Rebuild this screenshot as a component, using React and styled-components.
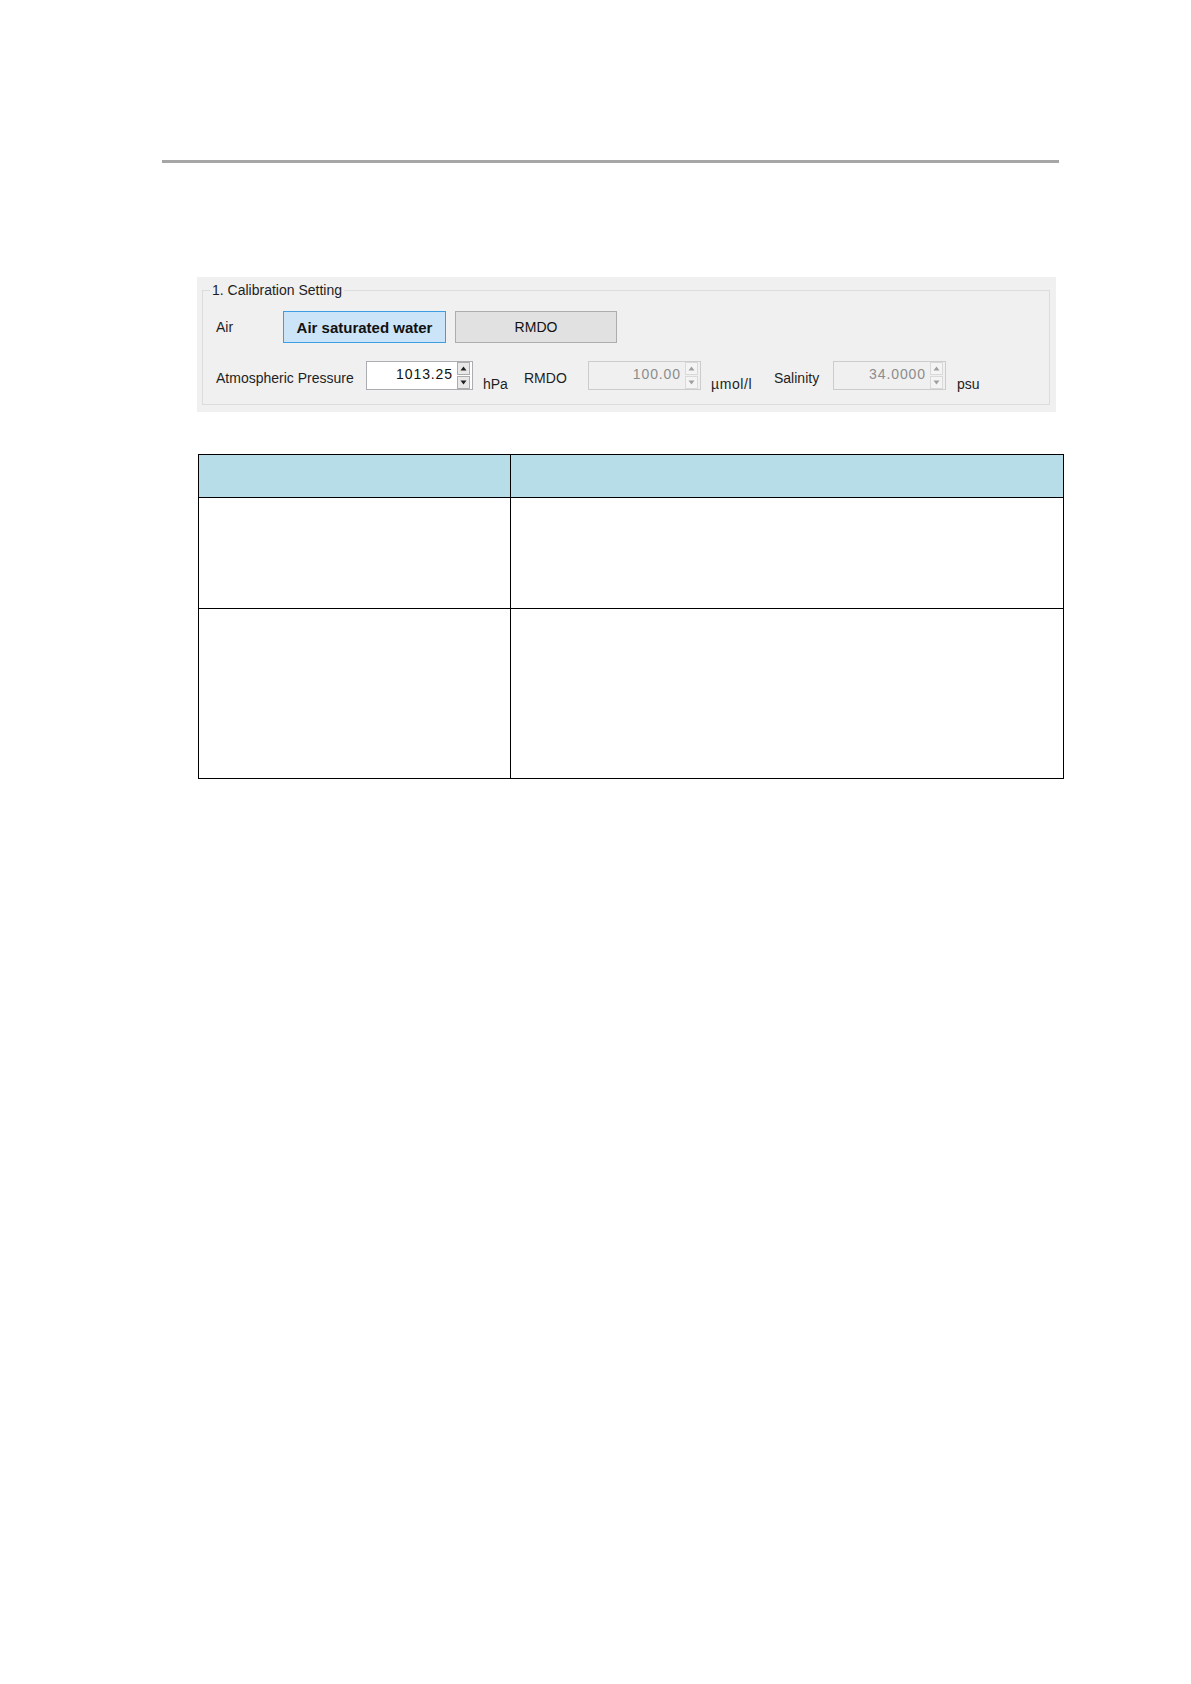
import styled, { createGlobalStyle } from 'styled-components';

const GlobalStyle = createGlobalStyle`
  html, body {
    margin: 0;
    padding: 0;
    background: #ffffff;
  }
  body {
    font-family: "Liberation Sans", Arial, sans-serif;
    min-height: 1684px;
  }
`;

const Page = styled.div`
  width: 1191px;
  padding-top: 160px;
  box-sizing: border-box;
`;

const Rule = styled.div`
  margin-left: 162px;
  width: 897px;
  height: 3px;
  background: #a6a6a6;
`;

const Panel = styled.div`
  margin: 114px 0 0 197px;
  width: 859px;
  height: 135px;
  box-sizing: border-box;
  background: #f0f0f0;
  padding: 5px 6px 7px 5px;
`;

const Group = styled.fieldset`
  margin: 0;
  height: 100%;
  box-sizing: border-box;
  border: 1px solid #dcdcdc;
  padding: 0 0 0 13px;
`;

const Legend = styled.legend`
  margin-left: -6px;
  padding: 0 2px;
  font-size: 14px;
  line-height: 16px;
  color: #1e1e1e;
`;

const Row = styled.div`
  display: flex;
  align-items: center;
  margin-top: ${p => p.$top}px;
  height: ${p => p.$h}px;
`;

const Label = styled.span`
  width: ${p => p.$w}px;
  flex-shrink: 0;
  padding-top: ${p => p.$dy || 0}px;
  font-size: 14px;
  color: #1e1e1e;
  white-space: nowrap;
`;

const Unit = styled.span`
  width: ${p => p.$w}px;
  margin-left: ${p => p.$ml}px;
  flex-shrink: 0;
  align-self: flex-end;
  margin-bottom: -2px;
  font-size: 14px;
  letter-spacing: ${p => p.$ls || 0}px;
  color: #1e1e1e;
  white-space: nowrap;
`;

const Button = styled.div`
  width: ${p => p.$w}px;
  height: 32px;
  margin-right: 9px;
  box-sizing: border-box;
  display: flex;
  align-items: center;
  justify-content: center;
  font-size: ${p => (p.$active ? 15 : 14)}px;
  font-weight: ${p => (p.$active ? 700 : 400)};
  color: #111;
  background: ${p => (p.$active ? '#cce4f7' : '#e1e1e1')};
  border: 1px solid ${p => (p.$active ? '#3d9de2' : '#adadad')};
`;

const Spin = styled.div`
  width: ${p => p.$w}px;
  height: 29px;
  box-sizing: border-box;
  display: flex;
  align-items: stretch;
  background: ${p => (p.$disabled ? '#f0f0f0' : '#ffffff')};
  border: 1px solid ${p => (p.$disabled ? '#cccccc' : '#abadb3')};
  padding: 0 2px 0 0;
`;

const SpinValue = styled.span`
  flex: 1;
  text-align: right;
  padding: 4px 4px 0 0;
  font-size: 14px;
  letter-spacing: 0.9px;
  color: ${p => (p.$disabled ? '#8c8c8c' : '#111')};
`;

const SpinButtons = styled.div`
  width: 13px;
  display: flex;
  flex-direction: column;
  justify-content: center;
  gap: 1px;
`;

const SpinBtn = styled.div`
  height: 13px;
  box-sizing: border-box;
  display: flex;
  align-items: center;
  justify-content: center;
  background: ${p => (p.$disabled ? '#f4f4f4' : '#e8e8e8')};
  border: 1px solid ${p => (p.$disabled ? '#d9d9d9' : '#acacac')};
`;

const Table = styled.table`
  margin: 42px 0 0 198px;
  width: 866px;
  border-collapse: collapse;
  table-layout: fixed;
`;

const Th = styled.th`
  height: 42px;
  background: #b7dde8;
  border: 1px solid #000;
  padding: 0;
`;

const Td = styled.td`
  height: ${p => p.$h}px;
  border: 1px solid #000;
  padding: 0;
`;

const Arrow = ({ up, disabled }) => (
  <svg width="7" height="5" viewBox="0 0 7 5">
    <path
      d={up ? 'M3.5 0.5 L6.5 4.5 L0.5 4.5 Z' : 'M0.5 0.5 L6.5 0.5 L3.5 4.5 Z'}
      fill={disabled ? '#a0a0a0' : '#202020'}
    />
  </svg>
);

const SpinBox = ({ value, width, disabled }) => (
  <Spin $w={width} $disabled={disabled}>
    <SpinValue $disabled={disabled}>{value}</SpinValue>
    <SpinButtons>
      <SpinBtn $disabled={disabled}><Arrow up disabled={disabled} /></SpinBtn>
      <SpinBtn $disabled={disabled}><Arrow disabled={disabled} /></SpinBtn>
    </SpinButtons>
  </Spin>
);

const App = () => {
  return (
    <>
      <GlobalStyle />
      <Page>
        <Rule />
        <Panel>
          <Group>
            <Legend>1. Calibration Setting</Legend>
            <Row $top={13} $h={32}>
              <Label $w={67}>Air</Label>
              <Button $w={163} $active>Air saturated water</Button>
              <Button $w={162}>RMDO</Button>
            </Row>
            <Row $top={18} $h={29}>
              <Label $w={150} $dy={4}>Atmospheric Pressure</Label>
              <SpinBox value="1013.25" width={107} />
              <Unit $ml={10} $w={41}>hPa</Unit>
              <Label $w={64} $dy={4}>RMDO</Label>
              <SpinBox value="100.00" width={113} disabled />
              <Unit $ml={10} $w={63} $ls={0.6}>µmol/l</Unit>
              <Label $w={59} $dy={4}>Salinity</Label>
              <SpinBox value="34.0000" width={113} disabled />
              <Unit $ml={11} $w={40}>psu</Unit>
            </Row>
          </Group>
        </Panel>
        <Table>
          <colgroup>
            <col style={{ width: '312px' }} />
            <col />
          </colgroup>
          <thead>
            <tr>
              <Th />
              <Th />
            </tr>
          </thead>
          <tbody>
            <tr>
              <Td $h={110} />
              <Td $h={110} />
            </tr>
            <tr>
              <Td $h={169} />
              <Td $h={169} />
            </tr>
          </tbody>
        </Table>
      </Page>
    </>
  );
};

export default App;
